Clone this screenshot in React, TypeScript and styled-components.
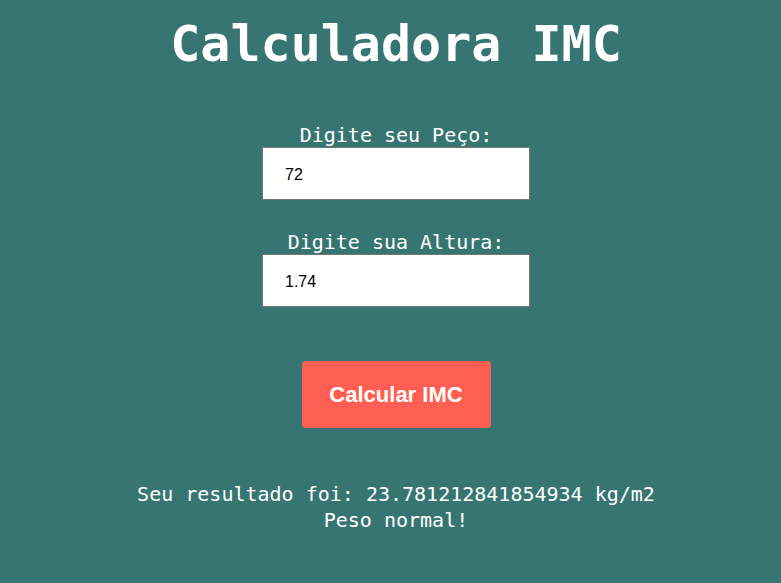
import React, { useState } from 'react';
import styled, { createGlobalStyle } from 'styled-components';

const GlobalStyle = createGlobalStyle`
  html, body {
    margin: 0;
    padding: 0;
    background-color: #377572;
  }
`;

export default function App() {
  const [peso, setPeso] = useState('72');
  const [altura, setAltura] = useState('1.74');
  const [imc, setImc] = useState<number | null>(72 / (1.74 * 1.74));

  const calcular = () => {
    const p = parseFloat(peso);
    const a = parseFloat(altura);
    if (p > 0 && a > 0) setImc(p / (a * a));
  };

  const classificar = (v: number) => {
    if (v < 18.5) return 'Abaixo do peso!';
    if (v < 25) return 'Peso normal!';
    if (v < 30) return 'Sobrepeso!';
    return 'Obesidade!';
  };

  return (
    <>
      <GlobalStyle />
      <Container>
        <Title>Calculadora IMC</Title>
        <Field>
          <Label htmlFor="peso">Digite seu Peço:</Label>
          <Input id="peso" value={peso} onChange={(e) => setPeso(e.target.value)} />
        </Field>
        <Field>
          <Label htmlFor="altura">Digite sua Altura:</Label>
          <Input id="altura" value={altura} onChange={(e) => setAltura(e.target.value)} />
        </Field>
        <Button onClick={calcular}>Calcular IMC</Button>
        {imc !== null && (
          <Result>
            <p>Seu resultado foi: {imc} kg/m2</p>
            <p>{classificar(imc)}</p>
          </Result>
        )}
      </Container>
    </>
  );
}

const Container = styled.main`
  display: flex;
  flex-direction: column;
  align-items: center;
  padding-left: 11px;
  color: #fff;
  font-family: 'DejaVu Sans Mono', monospace;
`;

const Title = styled.h1`
  font-size: 50px;
  font-weight: bold;
  margin: 14px 0 49px;
  line-height: 60px;
`;

const Field = styled.div`
  display: flex;
  flex-direction: column;
  align-items: center;
  margin-bottom: 30px;
`;

const Label = styled.label`
  font-size: 20px;
  line-height: 24px;
`;

const Input = styled.input`
  box-sizing: border-box;
  width: 268px;
  height: 53px;
  padding: 2px 22px 0;
  border: 1px solid #767676;
  background: #fff;
  font-family: Arial, 'Liberation Sans', sans-serif;
  font-size: 16px;
  color: #000;
  outline: none;
`;

const Button = styled.button`
  width: 189px;
  height: 67px;
  margin-top: 24px;
  border: none;
  border-radius: 4px;
  background-color: #ff5f52;
  color: #fff;
  font-family: Arial, 'Liberation Sans', sans-serif;
  font-size: 22px;
  font-weight: bold;
  cursor: pointer;
`;

const Result = styled.div`
  margin-top: 53px;
  text-align: center;
  font-size: 20px;
  line-height: 26px;

  p {
    margin: 0;
  }
`;
